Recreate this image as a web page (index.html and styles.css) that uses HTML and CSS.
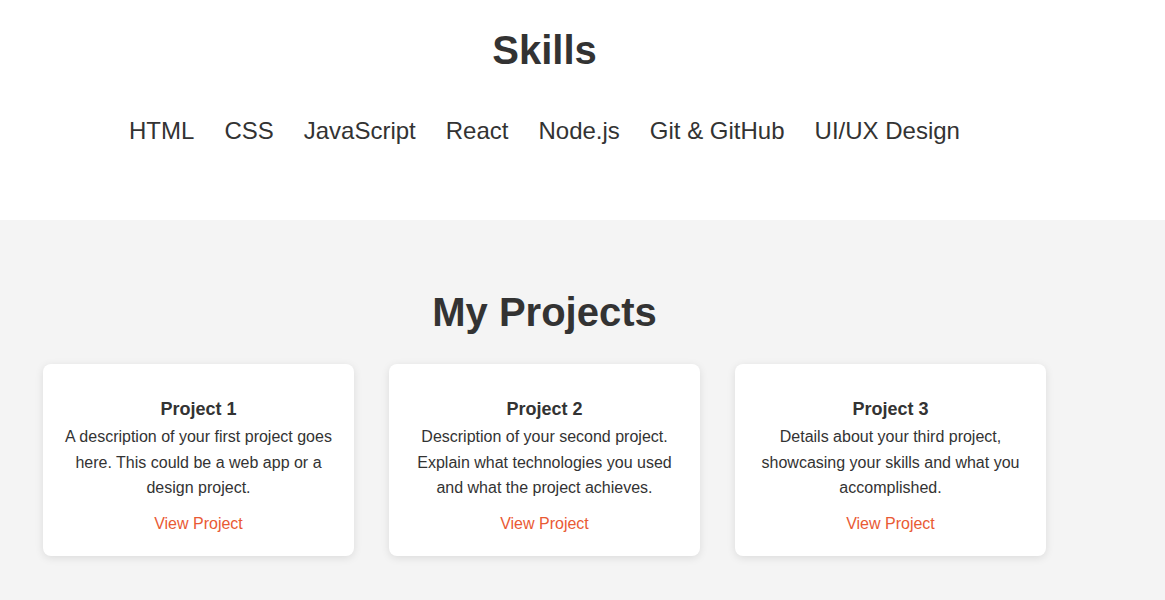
FILE: index.html
```html
<!DOCTYPE html>
<html lang="en">
<head>
<meta charset="utf-8">
<title>Portfolio</title>
<link rel="stylesheet" href="styles.css">
</head>
<body>
<section class="skills">
  <div class="container">
    <h2 class="section-title">Skills</h2>
    <ul class="skill-list">
      <li>HTML</li>
      <li>CSS</li>
      <li>JavaScript</li>
      <li>React</li>
      <li>Node.js</li>
      <li>Git &amp; GitHub</li>
      <li>UI/UX Design</li>
    </ul>
  </div>
</section>
<section class="projects">
  <div class="container">
    <h2 class="section-title">My Projects</h2>
    <div class="project-grid">
      <div class="card">
        <h3>Project 1</h3>
        <p>A description of your first project goes here. This could be a web app or a design project.</p>
        <a href="#" class="card-link">View Project</a>
      </div>
      <div class="card">
        <h3>Project 2</h3>
        <p>Description of your second project. Explain what technologies you used and what the project achieves.</p>
        <a href="#" class="card-link">View Project</a>
      </div>
      <div class="card">
        <h3>Project 3</h3>
        <p>Details about your third project, showcasing your skills and what you accomplished.</p>
        <a href="#" class="card-link">View Project</a>
      </div>
    </div>
  </div>
</section>
</body>
</html>
```

FILE: styles.css
```css
* { box-sizing: border-box; }

body {
  margin: 0;
  font-family: "Liberation Sans", Arial, sans-serif;
  line-height: 1.6;
  color: #333;
  background: #f4f4f4;
}

.container {
  width: 1003px;
  margin-left: 43px;
  text-align: center;
}

.section-title {
  margin: 0;
  font-size: 40px;
  line-height: 64px;
  font-weight: bold;
  color: #333;
}

.skills {
  background: #fff;
  padding: 18px 0 70px;
}

.skill-list {
  list-style: none;
  margin: 30px 0 0;
  padding: 0;
  display: flex;
  justify-content: center;
  gap: 30px;
  font-size: 24px;
}

.projects {
  background: #f4f4f4;
  padding: 60px 0 40px;
}

.projects .section-title {
  margin-bottom: 20px;
}

.project-grid {
  display: grid;
  grid-template-columns: repeat(3, 311px);
  gap: 35px;
}

.card {
  background: #fff;
  border-radius: 8px;
  box-shadow: 0 2px 8px rgba(0, 0, 0, 0.1);
  padding: 21px 20px 19px;
  text-align: center;
}

.card h3 {
  margin: 10px 0 0;
  font-size: 18px;
  line-height: 28.8px;
}

.card p {
  margin: 0 0 10px;
  font-size: 16px;
}

.card-link {
  color: #e95a34;
  text-decoration: none;
  font-size: 16px;
}
```
